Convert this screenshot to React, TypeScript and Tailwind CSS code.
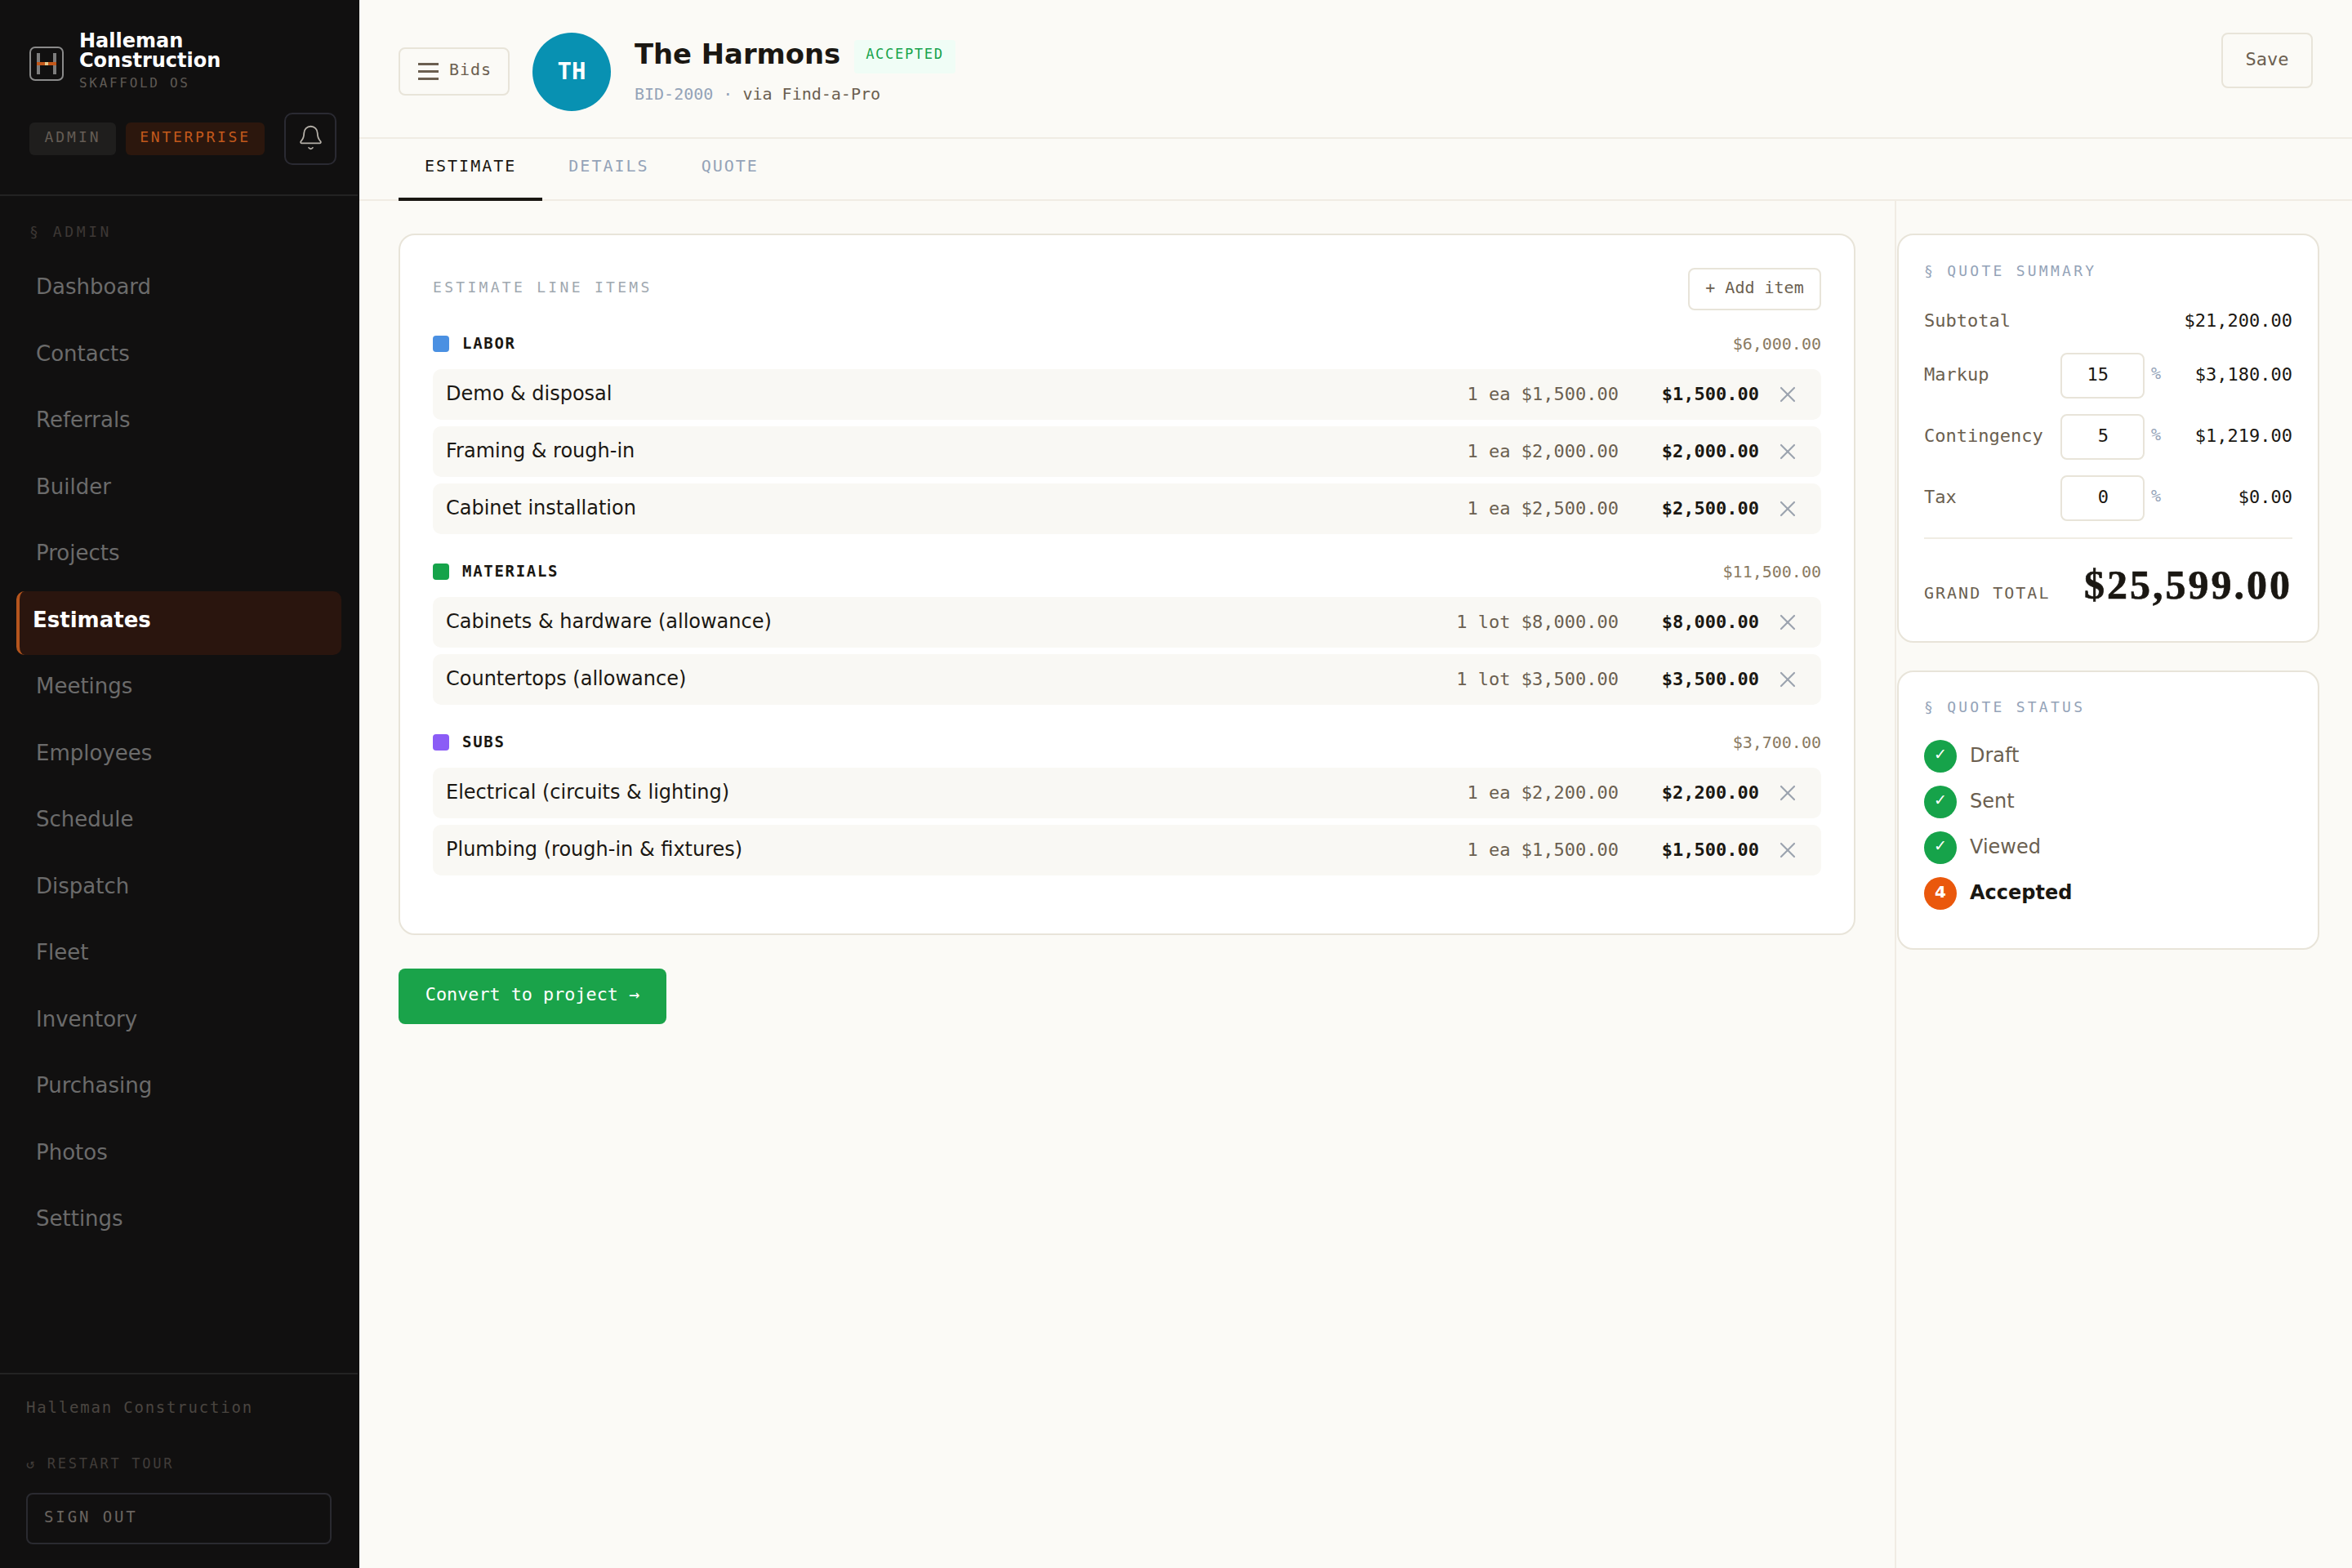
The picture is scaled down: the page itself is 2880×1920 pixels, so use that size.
import { Bell, X } from "lucide-react";

const navItems = [
  "Dashboard",
  "Contacts",
  "Referrals",
  "Builder",
  "Projects",
  "Estimates",
  "Meetings",
  "Employees",
  "Schedule",
  "Dispatch",
  "Fleet",
  "Inventory",
  "Purchasing",
  "Photos",
  "Settings",
];

const groups = [
  {
    name: "LABOR",
    color: "bg-[#4a90e2]",
    total: "$6,000.00",
    rows: [
      { name: "Demo & disposal", detail: "1 ea $1,500.00", amount: "$1,500.00" },
      { name: "Framing & rough-in", detail: "1 ea $2,000.00", amount: "$2,000.00" },
      { name: "Cabinet installation", detail: "1 ea $2,500.00", amount: "$2,500.00" },
    ],
  },
  {
    name: "MATERIALS",
    color: "bg-[#16a34a]",
    total: "$11,500.00",
    rows: [
      { name: "Cabinets & hardware (allowance)", detail: "1 lot $8,000.00", amount: "$8,000.00" },
      { name: "Countertops (allowance)", detail: "1 lot $3,500.00", amount: "$3,500.00" },
    ],
  },
  {
    name: "SUBS",
    color: "bg-[#8b5cf6]",
    total: "$3,700.00",
    rows: [
      { name: "Electrical (circuits & lighting)", detail: "1 ea $2,200.00", amount: "$2,200.00" },
      { name: "Plumbing (rough-in & fixtures)", detail: "1 ea $1,500.00", amount: "$1,500.00" },
    ],
  },
];

const rates = [
  { label: "Markup", value: "15", amount: "$3,180.00" },
  { label: "Contingency", value: "5", amount: "$1,219.00" },
  { label: "Tax", value: "0", amount: "$0.00" },
];

const statuses = ["Draft", "Sent", "Viewed"];

const mono = "font-['DejaVu_Sans_Mono',monospace]";

function Logo() {
  return (
    <svg width="42" height="42" viewBox="0 0 42 42" className="mt-[6px] shrink-0">
      <rect x="1" y="1" width="40" height="40" rx="6" fill="none" stroke="#8a8a8a" strokeWidth="2" />
      <rect x="9" y="8" width="4" height="26" fill="#7d7d7d" />
      <rect x="29" y="8" width="4" height="26" fill="#7d7d7d" />
      <rect x="9" y="19" width="24" height="4" fill="#c2571a" />
      <rect x="19" y="19" width="4" height="4" fill="#e8c98a" />
    </svg>
  );
}

function Sidebar() {
  return (
    <aside className="flex h-full w-[440px] shrink-0 flex-col border-r-2 border-[#111010] bg-[#111010]">
      <div className="h-[240px] shrink-0 border-b-2 border-[#232323] px-[36px] pt-[38px]">
        <div className="flex items-center gap-[19px]">
          <Logo />
          <div>
            <div className="text-[24px] leading-[24px] font-bold text-white">
              Halleman
              <br />
              Construction
            </div>
            <div className={`${mono} mt-[6px] text-[16px] leading-[20px] tracking-[2.7px] text-[#5f5a55]`}>
              SKAFFOLD OS
            </div>
          </div>
        </div>
        <div className="mt-[26px] flex items-center">
          <span className={`${mono} flex h-[40px] w-[106px] shrink-0 items-center justify-center rounded-[6px] bg-[#1f1e1d] pb-[5px] text-[18px] tracking-[3px] text-[#655d55]`}>
            ADMIN
          </span>
          <span className={`${mono} ml-[12px] flex h-[40px] w-[170px] shrink-0 items-center justify-center rounded-[6px] bg-[#2c170d] pb-[5px] text-[18px] tracking-[2.7px] text-[#c2591c]`}>
            ENTERPRISE
          </span>
          <button className="ml-[24px] flex size-[64px] shrink-0 items-center justify-center rounded-[10px] border-2 border-[#2a2a32] pb-[3px] text-[#b5b0a8]">
            <Bell size={33} strokeWidth={1.3} />
          </button>
        </div>
      </div>
      <div className="flex-1 px-[20px] pt-[32px]">
        <div className={`${mono} mb-[20px] pl-[16px] text-[18px] leading-[24px] tracking-[3.6px] text-[#3d3835]`}>
          § ADMIN
        </div>
        <nav className="flex flex-col gap-[3.5px]">
          {navItems.map((item) =>
            item === "Estimates" ? (
              <a
                key={item}
                className="h-[78px] rounded-[10px] border-l-4 border-[#b5551d] bg-[#2a150e] pt-[19px] pl-[16px] text-[26px] leading-[32px] font-bold text-white"
              >
                {item}
              </a>
            ) : (
              <a key={item} className="h-[78px] pt-[19px] pl-[24px] text-[26px] leading-[32px] text-[#6b6b6b]">
                {item}
              </a>
            ),
          )}
        </nav>
      </div>
      <div className="h-[239px] shrink-0 border-t-2 border-[#232323] px-[32px] pt-[27px]">
        <div className={`${mono} text-[19px] leading-[26px] tracking-[1.8px] text-[#4a4540]`}>Halleman Construction</div>
        <div className={`${mono} mt-[45px] text-[17px] leading-[22px] tracking-[2.7px] text-[#413d3a]`}>↺ RESTART TOUR</div>
        <button className={`${mono} mt-[25px] flex h-[63px] w-[374px] items-center rounded-[8px] border-2 border-[#2a2a30] pb-[4px] pl-[20px] text-[19px] tracking-[2.9px] text-[#6b6560]`}>
          SIGN OUT
        </button>
      </div>
    </aside>
  );
}

function Header() {
  return (
    <header className="flex h-[170px] shrink-0 items-start border-b-2 border-[#f0ece4] pl-[48px]">
      <button className={`${mono} mt-[58px] flex h-[59px] w-[136px] items-center gap-[13px] rounded-[8px] border-2 border-[#e8e4d9] pl-[22px] text-[20px] tracking-[1px] text-[#6b5f50]`}>
        <span className="flex w-[25px] flex-col gap-[6px]">
          <span className="h-[3px] bg-[#6b5f50]" />
          <span className="h-[3px] bg-[#6b5f50]" />
          <span className="h-[3px] bg-[#6b5f50]" />
        </span>
        <span className="-mt-[5px]">Bids</span>
      </button>
      <div className={`${mono} mt-[40px] ml-[28px] flex size-[96px] items-center justify-center rounded-full bg-[#0891b2] text-[29px] font-bold text-white`}>
        TH
      </div>
      <div className="mt-[44px] ml-[29px]">
        <div className="flex items-center gap-[17px]">
          <h1 className="text-[33.8px] leading-[44px] font-bold text-[#1a1712]">The Harmons</h1>
          <span className={`${mono} mt-[5px] flex h-[41px] items-center rounded-[4px] bg-[#f0fdf6] px-[14px] pb-[5px] text-[17px] tracking-[1.7px] text-[#16a34a]`}>
            ACCEPTED
          </span>
        </div>
        <div className={`${mono} mt-[11px] text-[20px] leading-[28px] text-[#6b5f50]`}>
          <span className="text-[#94a3b8]">BID-2000 · </span>via Find-a-Pro
        </div>
      </div>
      <button className={`${mono} mt-[40px] mr-[48px] ml-auto flex h-[68px] w-[112px] items-center justify-center rounded-[8px] border-2 border-[#e8e4d9] pb-[3px] text-[22px] text-[#6b5f50]`}>
        Save
      </button>
    </header>
  );
}

function Tabs() {
  return (
    <div className={`${mono} flex h-[76px] shrink-0 border-b-2 border-[#f0ece4] text-[20px] tracking-[2px]`}>
      <div className="ml-[48px] -mb-[2px] h-[76px] border-b-4 border-[#1a1712] px-[32px] pt-[18px] leading-[30px] text-[#1a1712]">ESTIMATE</div>
      <div className="px-[32px] pt-[18px] leading-[30px] text-[#94a3b8]">DETAILS</div>
      <div className="px-[32px] pt-[18px] leading-[30px] text-[#94a3b8]">QUOTE</div>
    </div>
  );
}

function LineItems() {
  return (
    <section className="rounded-[20px] border-2 border-[#e8e4d9] bg-white px-[40px] pt-[40px] pb-[38px]">
      <div className="mb-[28px] flex h-[52px] items-start justify-between">
        <div className={`${mono} mt-[11px] text-[18px] leading-[26px] tracking-[3.3px] text-[#a0a8b0]`}>ESTIMATE LINE ITEMS</div>
        <button className={`${mono} flex h-[52px] w-[163px] items-center justify-center rounded-[8px] border-2 border-[#e8e4d9] pb-[4px] text-[20px] text-[#6b5f50]`}>
          + Add item
        </button>
      </div>
      {groups.map((group) => (
        <div key={group.name} className="mb-[33px]">
          <div className="mb-[18px] flex h-[26px] items-center justify-between">
            <div className="flex items-center gap-[16px]">
              <span className={`size-[20px] rounded-[4px] ${group.color}`} />
              <span className={`${mono} -mt-[1px] text-[19px] font-bold tracking-[1.7px] text-[#1a1712]`}>{group.name}</span>
            </div>
            <span className={`${mono} text-[20px] text-[#8a7a62]`}>{group.total}</span>
          </div>
          <div className="flex flex-col gap-[8px]">
            {group.rows.map((row) => (
              <div key={row.name} className="flex h-[62px] items-center rounded-[10px] bg-[#f9f8f4] pr-[14px] pl-[16px]">
                <span className="flex-1 pb-[2px] text-[24px] text-[#1a1712]">{row.name}</span>
                <span className={`${mono} pb-[1px] text-[22px] text-[#6b5f50]`}>{row.detail}</span>
                <span className={`${mono} w-[172px] pb-[1px] text-right text-[22px] font-bold text-[#1a1712]`}>{row.amount}</span>
                <span className="flex w-[62px] justify-center pl-[8px] text-[#9ca3af]">
                  <X size={32} strokeWidth={1.6} />
                </span>
              </div>
            ))}
          </div>
        </div>
      ))}
    </section>
  );
}

function QuoteSummary() {
  return (
    <section className="h-[501px] rounded-[20px] border-2 border-[#e8e4d9] bg-white px-[31px] pt-[31px]">
      <div className={`${mono} text-[18px] leading-[26px] tracking-[3.25px] text-[#94a3b8]`}>§ QUOTE SUMMARY</div>
      <div className={`${mono} mt-[32px] flex h-[30px] items-center justify-between text-[22px]`}>
        <span className="text-[#6b5f50]">Subtotal</span>
        <span className="text-[#1a1712]">$21,200.00</span>
      </div>
      <div className="mt-[25px] flex flex-col gap-[19px]">
        {rates.map((rate) => (
          <div key={rate.label} className={`${mono} flex h-[56px] items-center text-[22px]`}>
            <span className="w-[167px] pb-[3px] text-[#6b5f50]">{rate.label}</span>
            <input
              readOnly
              value={rate.value}
              className="h-[56px] w-[103px] rounded-[8px] border-2 border-[#e8e4d9] pr-[42px] pb-[3px] text-right text-[#1a1712] outline-none"
            />
            <span className="mt-[-6px] ml-[8px] text-[20px] text-[#94a3b8]">%</span>
            <span className="ml-auto pb-[3px] text-[#1a1712]">{rate.amount}</span>
          </div>
        ))}
      </div>
      <div className="mt-[20px] flex h-[92px] items-end justify-between border-t-2 border-[#f0ece4] pb-[6px]">
        <span className={`${mono} mb-[3px] text-[20px] tracking-[2px] text-[#6b5f50]`}>GRAND TOTAL</span>
        <span className="font-['Liberation_Serif',serif] text-[50px] leading-[56px] font-bold tracking-[3px] text-[#1a1712] [-webkit-text-stroke:0.7px_#1a1712]">$25,599.00</span>
      </div>
    </section>
  );
}

function QuoteStatus() {
  return (
    <section className="mt-[34px] h-[342px] rounded-[20px] border-2 border-[#e8e4d9] bg-white px-[31px] pt-[30px]">
      <div className={`${mono} text-[18px] leading-[26px] tracking-[3.25px] text-[#94a3b8]`}>§ QUOTE STATUS</div>
      <div className="mt-[27px] flex flex-col gap-[16px]">
        {statuses.map((status) => (
          <div key={status} className="flex h-[40px] items-center gap-[16px]">
            <span className="flex size-[40px] items-center justify-center rounded-full bg-[#16a34a] pb-[6px] text-[19px] text-white">✓</span>
            <span className="pb-[2px] text-[24px] text-[#6b5f50]">{status}</span>
          </div>
        ))}
        <div className="flex h-[40px] items-center gap-[16px]">
          <span className="flex size-[40px] items-center justify-center rounded-full bg-[#ea580c] pb-[5px] text-[20px] font-bold text-white">4</span>
          <span className="pb-[2px] text-[24px] font-bold text-[#1a1712]">Accepted</span>
        </div>
      </div>
    </section>
  );
}

export default function App() {
  return (
    <div className="flex h-screen bg-[#fbfaf6] font-['DejaVu_Sans',sans-serif]">
      <Sidebar />
      <main className="flex min-w-0 flex-1 flex-col">
        <Header />
        <Tabs />
        <div className="flex flex-1">
          <div className="flex-1 px-[48px] pt-[40px]">
            <LineItems />
            <button className={`${mono} mt-[41px] flex h-[68px] w-[328px] items-center justify-center rounded-[8px] bg-[#1aa34a] pb-[4px] text-[21.8px] text-white`}>
              Convert to project →
            </button>
          </div>
          <aside className="w-[560px] shrink-0 border-l-2 border-[#f0ece4] pt-[40px] pr-[40px] pl-[1px]">
            <QuoteSummary />
            <QuoteStatus />
          </aside>
        </div>
      </main>
    </div>
  );
}
